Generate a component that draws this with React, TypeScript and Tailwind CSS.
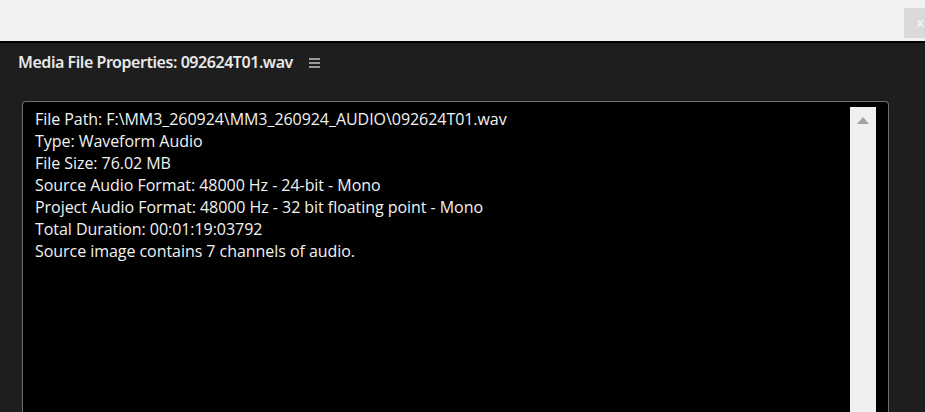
import React from "react";

const lines = [
  "File Path: F:\\MM3_260924\\MM3_260924_AUDIO\\092624T01.wav",
  "Type: Waveform Audio",
  "File Size: 76.02 MB",
  "Source Audio Format: 48000 Hz - 24-bit - Mono",
  "Project Audio Format: 48000 Hz - 32 bit floating point - Mono",
  "Total Duration: 00:01:19:03792",
  "Source image contains 7 channels of audio.",
];

export default function App() {
  return (
    <div className="w-[925px] h-[412px] overflow-hidden flex flex-col bg-[#1e1e1e]">
      <div className="h-[41px] bg-[#f2f2f2] flex justify-end items-start pt-[8px] shrink-0">
        <div className="w-[21px] h-[30px] bg-[#d9d9d9] flex items-center justify-end pr-[1px] text-[#f4f4f4] text-[13px] font-bold" style={{ fontFamily: '"Liberation Sans", sans-serif' }}>
          x
        </div>
      </div>
      <div className="h-[2px] bg-[#000] shrink-0" />
      <div className="flex-1 flex flex-col px-[22px] pl-[18px]">
        <div className="h-[38px] flex items-center gap-[16px] shrink-0">
          <span className="text-[#e8e8e8] text-[16px] font-semibold tracking-[-0.45px]" style={{ fontFamily: '"Noto Sans", sans-serif' }}>
            Media File Properties: 092624T01.wav
          </span>
          <svg width="11" height="11" viewBox="0 0 11 11" className="mt-[1px]">
            <rect x="0" y="1" width="11" height="2" fill="#9a9a9a" />
            <rect x="0" y="5" width="11" height="2" fill="#9a9a9a" />
            <rect x="0" y="9" width="11" height="2" fill="#9a9a9a" />
          </svg>
        </div>
        <div className="mt-[20px] ml-[4px] w-[867px] flex-1 bg-black border border-[#6f6f6f] border-b-0 rounded-t-[4px] flex pt-[5px] pr-[12px]">
          <div className="flex-1 pl-[12px] pt-[1px] text-[#f2f2f2] text-[16px] leading-[22px] tracking-[-0.05px]" style={{ fontFamily: '"Open Sans", sans-serif' }}>
            {lines.map((l) => (
              <div key={l} className="whitespace-pre">{l}</div>
            ))}
          </div>
          <div className="w-[26px] bg-[#f0f0f0] flex justify-center pt-[10px]">
            <svg width="12" height="8" viewBox="0 0 12 8">
              <polygon points="6,0 12,7 0,7" fill="#a3a3a3" />
            </svg>
          </div>
        </div>
      </div>
    </div>
  );
}
